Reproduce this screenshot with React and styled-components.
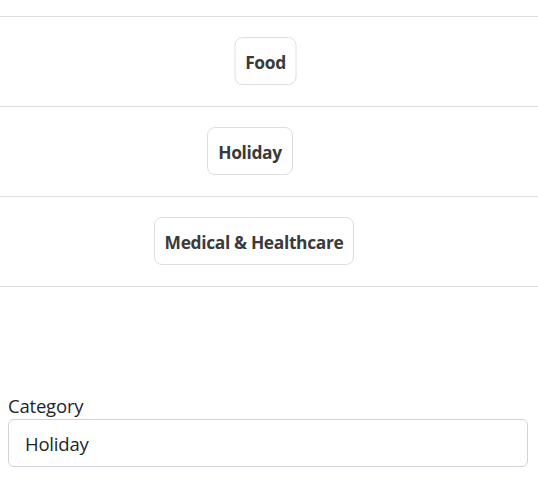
import React from "react";
import styled, { createGlobalStyle } from "styled-components";

const GlobalStyle = createGlobalStyle`
  html, body {
    margin: 0;
    padding: 0;
    background: #fff;
    font-family: "Open Sans", "Noto Sans", sans-serif;
    color: #212529;
  }
`;

const Page = styled.div`
  width: 538px;
  height: 484px;
  display: flex;
  flex-direction: column;
  overflow: hidden;
`;

const List = styled.div`
  padding-top: 16px;
  display: flex;
  flex-direction: column;
`;

const Row = styled.div`
  display: flex;
  justify-content: center;
  padding: 20px 0 21px;
  border-top: 1px solid #dedede;
  &:last-child {
    border-bottom: 1px solid #dedede;
  }
`;

const CategoryButton = styled.button`
  height: 48px;
  padding: 2px 10px 0;
  background: #fff;
  border: 1px solid #dedede;
  border-radius: 8px;
  font-family: "Open Sans", "Noto Sans", sans-serif;
  font-weight: 700;
  font-size: 17.4px;
  letter-spacing: -0.35px;
  color: #3a3a3a;
  transform: translateX(${(p) => p.$shift}px);
`;

const Field = styled.div`
  margin-top: auto;
  padding: 0 10px 17px 8px;
  display: flex;
  flex-direction: column;
`;

const Label = styled.label`
  font-size: 18.5px;
  line-height: 26px;
  color: #212529;
  letter-spacing: -0.2px;
`;

const Input = styled.input`
  height: 48px;
  box-sizing: border-box;
  padding: 1px 16px 0;
  border: 1px solid #ced4da;
  border-radius: 6px;
  font-family: "Open Sans", "Noto Sans", sans-serif;
  font-size: 18.5px;
  letter-spacing: -0.2px;
  color: #212529;
  outline: none;
`;

const categories = [
  { name: "Food", shift: -3.5 },
  { name: "Holiday", shift: -19 },
  { name: "Medical & Healthcare", shift: -15 },
];

export default function App() {
  return (
    <Page>
      <GlobalStyle />
      <List>
        {categories.map((c) => (
          <Row key={c.name}>
            <CategoryButton $shift={c.shift}>{c.name}</CategoryButton>
          </Row>
        ))}
      </List>
      <Field>
        <Label htmlFor="category">Category</Label>
        <Input id="category" defaultValue="Holiday" readOnly />
      </Field>
    </Page>
  );
}
